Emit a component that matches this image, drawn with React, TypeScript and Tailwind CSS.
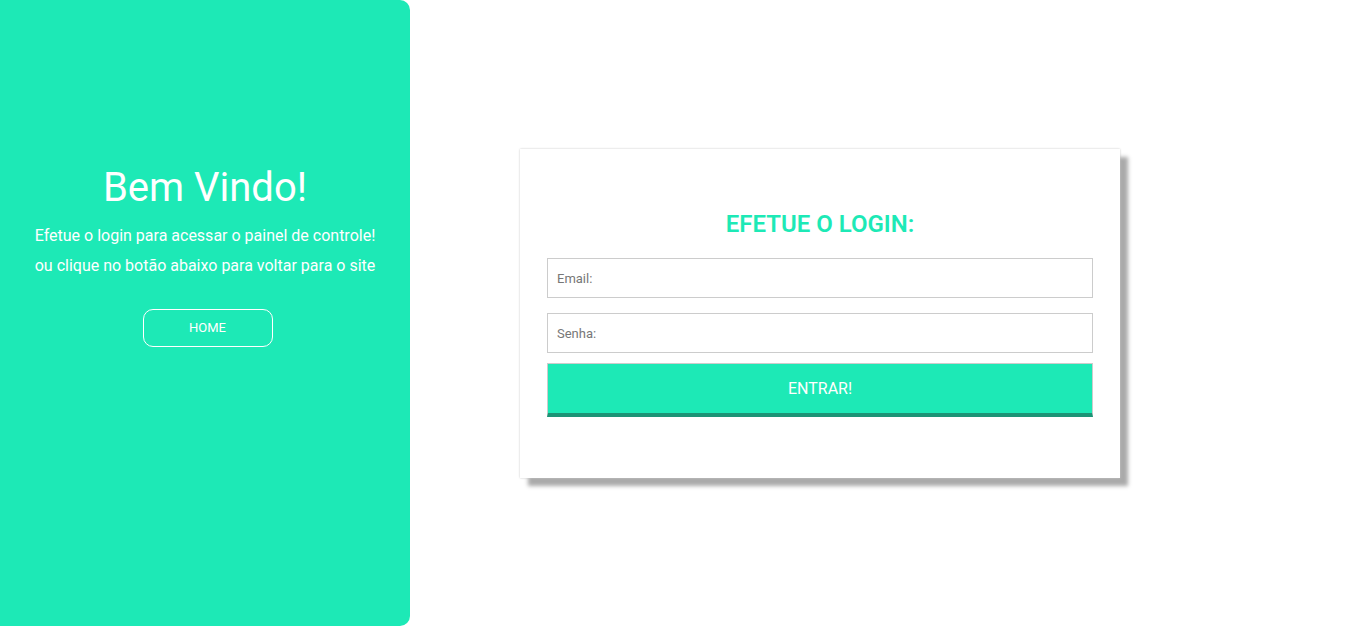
import React from 'react';

const App: React.FC = () => {
  return (
    <div className="flex h-[626px] w-full bg-white font-['Roboto','Liberation_Sans',sans-serif] overflow-hidden">
      {/* Left: welcome panel */}
      <div className="w-[410px] h-full bg-[#1de9b6] rounded-r-[10px] flex flex-col items-center pt-[164px] text-white">
        <h1 className="text-[40px] leading-[48px] font-normal">Bem Vindo!</h1>
        <p className="mt-[9px] text-[16px] leading-[30px] text-center">
          Efetue o login para acessar o painel de controle!
          <br />
          ou clique no botão abaixo para voltar para o site
        </p>
        <button className="mt-[28px] ml-[5px] w-[130px] h-[38px] border border-white rounded-[10px] text-[13px] font-normal text-white bg-transparent">
          HOME
        </button>
      </div>

      {/* Right: login card */}
      <div className="flex-1 flex items-center">
        <form className="ml-[110px] w-[600px] bg-white px-[27px] pt-[61px] pb-[61px] shadow-[0_0_2px_#c8c8c8,8px_8px_4px_#aaaaaa] flex flex-col">
          <h2 className="text-center text-[24px] leading-[28px] font-semibold text-[#1de9b6]">EFETUE O LOGIN:</h2>
          <input
            type="text"
            placeholder="Email:"
            className="mt-[20px] h-[40px] w-full border border-[#cccccc] px-[9px] pt-[1px] text-[13px] text-[#555] placeholder:text-[#777] outline-none"
          />
          <input
            type="password"
            placeholder="Senha:"
            className="mt-[15px] h-[40px] w-full border border-[#cccccc] px-[9px] pt-[1px] text-[13px] text-[#555] placeholder:text-[#777] outline-none"
          />
          <button
            type="button"
            className="mt-[10px] h-[54px] w-full bg-[#1de9b6] border border-[#cccccc] border-b-4 border-b-[#1c9476] pt-[2px] text-white text-[16px]"
          >
            ENTRAR!
          </button>
        </form>
      </div>
    </div>
  );
};

export default App;
